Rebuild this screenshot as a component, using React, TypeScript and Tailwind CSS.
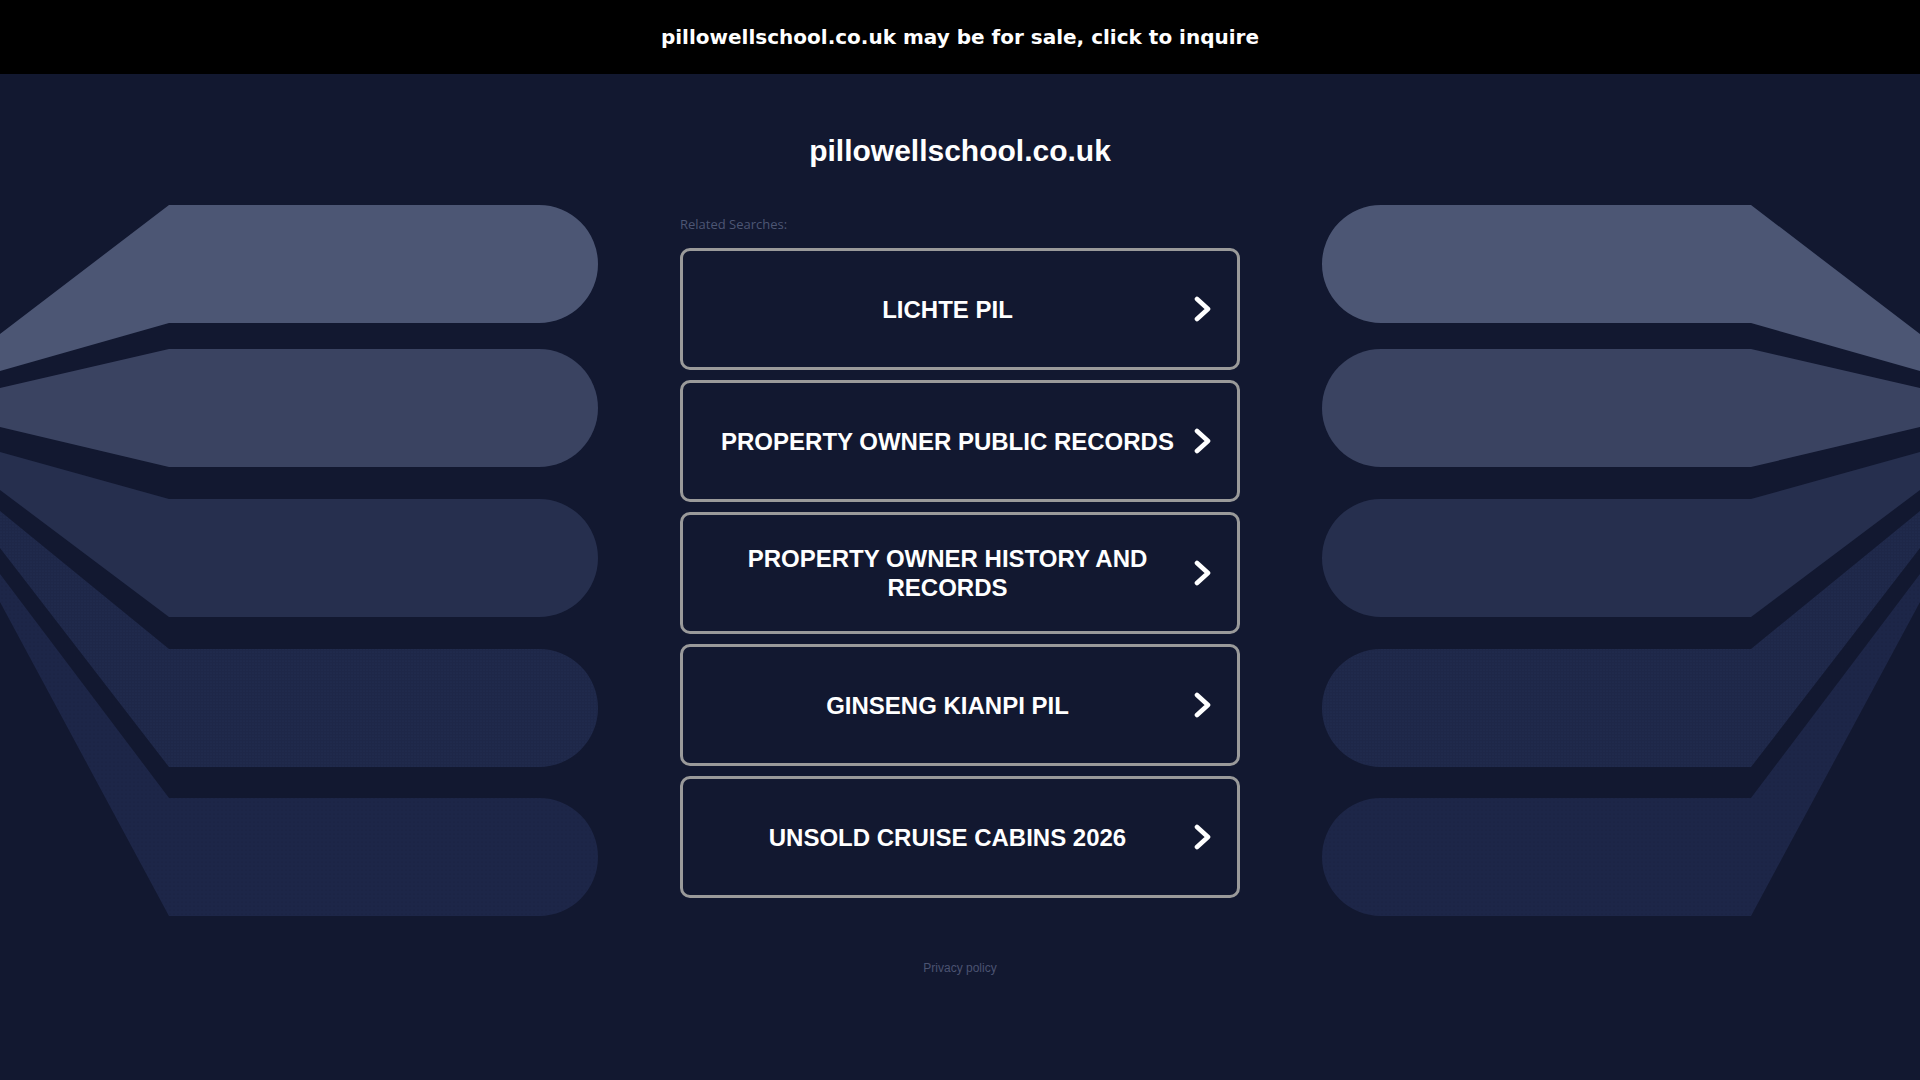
import React from "react";

const items = [
  "LICHTE PIL",
  "PROPERTY OWNER PUBLIC RECORDS",
  "PROPERTY OWNER HISTORY AND RECORDS",
  "GINSENG KIANPI PIL",
  "UNSOLD CRUISE CABINS 2026",
];

function Shapes({ mirrored }: { mirrored?: boolean }) {
  const end = (top: number, bottom: number) => {
    const r = (bottom - top) / 2;
    return `L539 ${top} A${r} ${r} 0 0 1 539 ${bottom}`;
  };
  return (
    <svg
      className={
        mirrored
          ? "absolute right-0 top-0 w-[598px] h-[1080px] -scale-x-100"
          : "absolute left-0 top-0 w-[598px] h-[1080px]"
      }
      viewBox="0 0 598 1080"
      aria-hidden="true"
    >
      <defs>
        <pattern id={mirrored ? "dotsA2" : "dotsA"} width="3" height="3" patternUnits="userSpaceOnUse">
          <rect width="3" height="3" fill="#1e2748" />
          <circle cx="1" cy="1" r="0.55" fill="#243056" />
        </pattern>
        <pattern id={mirrored ? "dotsB2" : "dotsB"} width="4" height="4" patternUnits="userSpaceOnUse">
          <rect width="4" height="4" fill="#1d2648" />
          <circle cx="2" cy="2" r="0.6" fill="#161e3b" />
        </pattern>
      </defs>
      <path d={`M0 334 L169 205 ${end(205, 323)} L169 323 L0 371 Z`} fill="#4c5674" />
      <path d={`M0 388 L169 349 ${end(349, 467)} L169 467 L0 427 Z`} fill="#3a4361" />
      <path d={`M0 452 L169 499 ${end(499, 617)} L169 617 L0 490 Z`} fill="#262f4e" />
      <path
        d={`M0 511 L169 649 ${end(649, 767)} L169 767 L0 548 Z`}
        fill={`url(#${mirrored ? "dotsA2" : "dotsA"})`}
      />
      <path
        d={`M0 574 L169 798 ${end(798, 916)} L169 916 L0 602 Z`}
        fill={`url(#${mirrored ? "dotsB2" : "dotsB"})`}
      />
    </svg>
  );
}

function Chevron() {
  return (
    <svg width="17" height="26" viewBox="0 0 17 26" className="shrink-0 ml-[17px] mr-[26px]" aria-hidden="true">
      <path d="M3 3 L14 13 L3 23" fill="none" stroke="#ffffff" strokeWidth="4.6" strokeLinecap="round" strokeLinejoin="round" />
    </svg>
  );
}

export default function App() {
  return (
    <div className="relative min-h-[1080px] w-full overflow-hidden bg-[#121830]">
      <div className="relative z-10 flex h-[74px] items-center justify-center bg-black">
        <span className="text-[20px] font-bold text-white [font-family:'DejaVu_Sans',sans-serif]">
          pillowellschool.co.uk may be for sale, click to inquire
        </span>
      </div>
      <div className="relative">
        <div className="absolute left-0 top-[-74px] h-[1080px] w-full">
          <Shapes />
          <Shapes mirrored />
        </div>
        <div className="relative mx-auto flex w-[560px] flex-col pt-[59px]">
          <h1 className="text-center text-[30px] font-bold leading-[36px] text-white [font-family:'Liberation_Sans',Arial,sans-serif]">
            pillowellschool.co.uk
          </h1>
          <div className="mt-[47px] text-[13px] leading-[16px] text-[#4d5674] [font-family:'Open_Sans',sans-serif]">
            Related Searches:
          </div>
          <div className="mt-[16px] flex flex-col gap-[10px]">
            {items.map((t) => (
              <a
                key={t}
                href="#"
                className="flex h-[122px] items-center rounded-[10px] border-[3px] border-[#9a9a9a]"
              >
                <span className="flex-1 pl-[35px] text-center text-[24px] font-bold leading-[29px] text-white [font-family:'Liberation_Sans',Arial,sans-serif]">
                  {t}
                </span>
                <Chevron />
              </a>
            ))}
          </div>
          <div className="mt-[63px] text-center text-[12px] leading-[14px] text-[#4b5371] [font-family:'Liberation_Sans',Arial,sans-serif]">
            Privacy policy
          </div>
        </div>
      </div>
    </div>
  );
}
